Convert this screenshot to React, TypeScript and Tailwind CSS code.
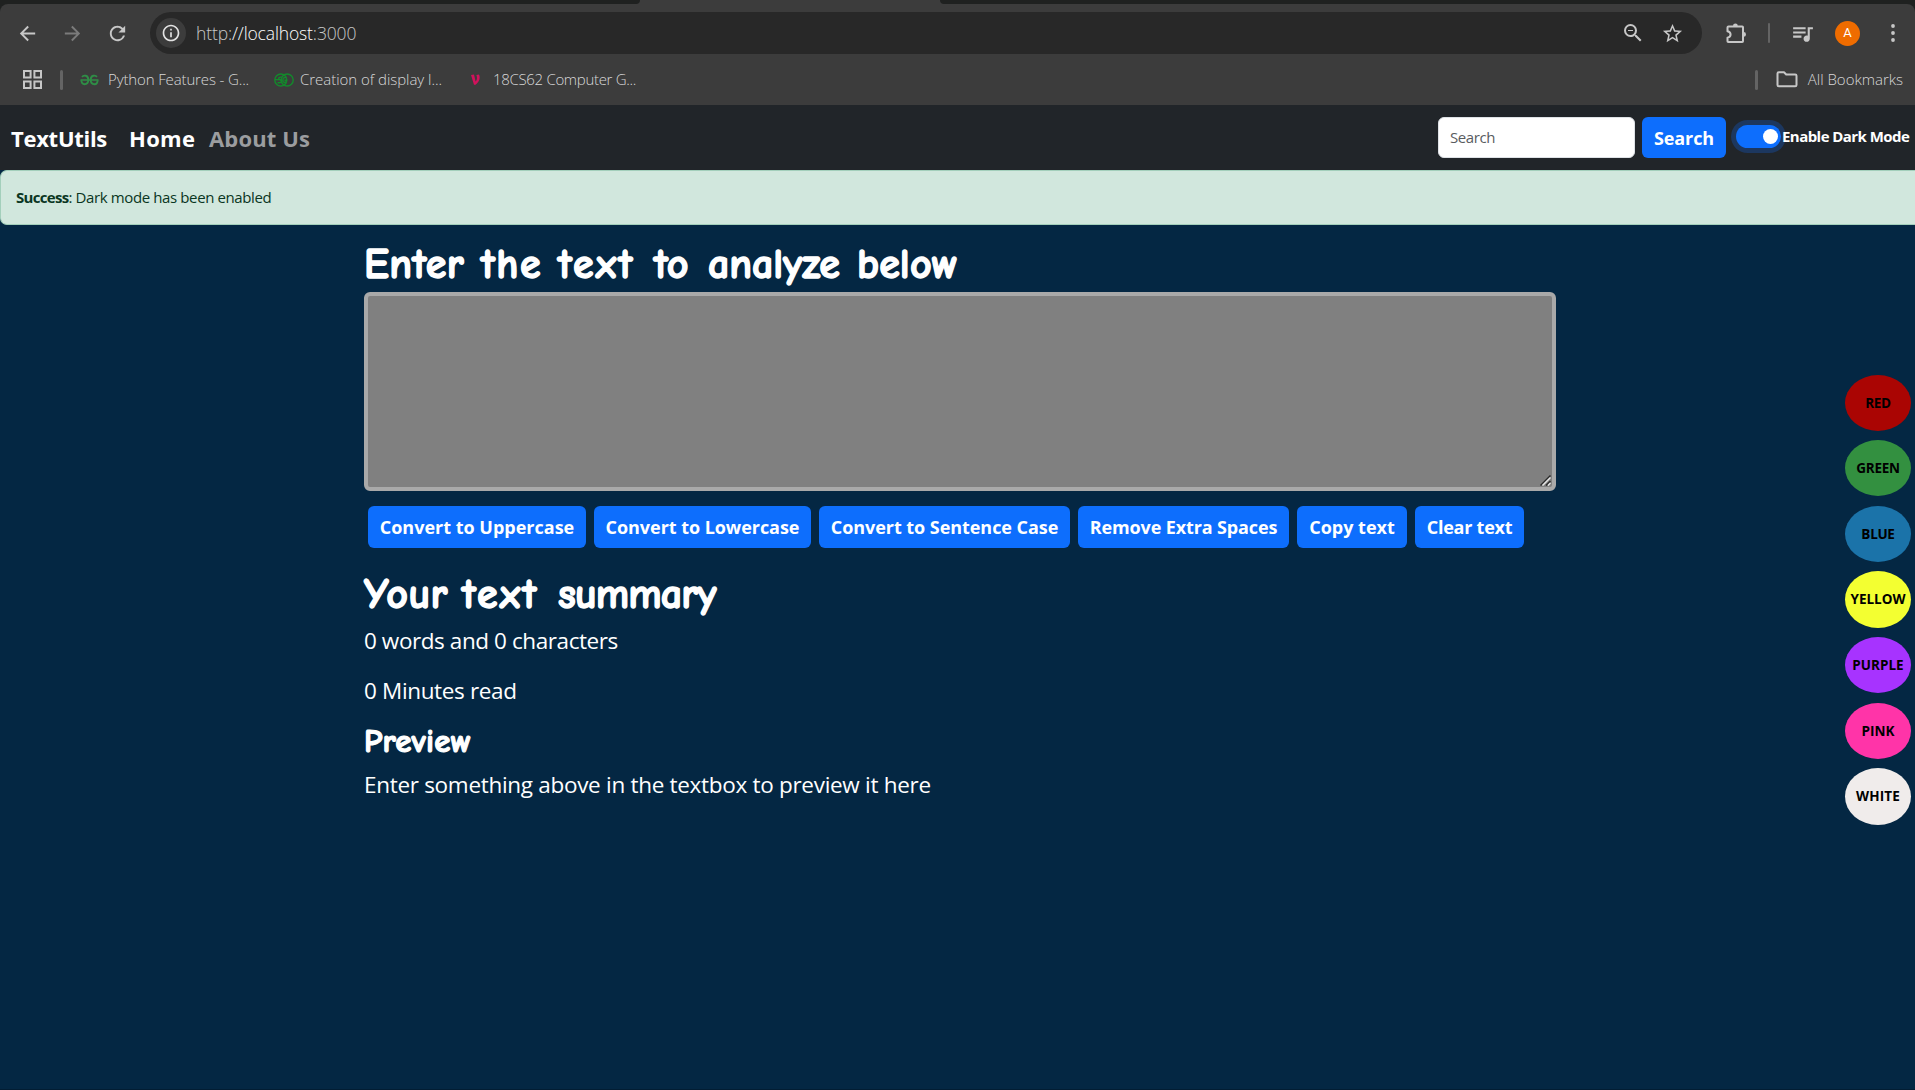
import {
  MdArrowBack,
  MdArrowForward,
  MdInfoOutline,
  MdQueueMusic,
  MdRefresh,
  MdStarBorder,
  MdZoomOut,
} from "react-icons/md";

const swatches = [
  { name: "RED", cls: "bg-[#aa0503] h-[56px] mb-[9px] tracking-[-0.4px]" },
  { name: "GREEN", cls: "bg-[#339040] h-[56px] mb-[10px] tracking-[-0.3px]" },
  { name: "BLUE", cls: "bg-[#1b73a9] h-[56px] mb-[9px] tracking-[-0.3px]" },
  { name: "YELLOW", cls: "bg-[#f3ff31] h-[57px] mb-[9px]" },
  { name: "PURPLE", cls: "bg-[#a733ff] h-[56px] mb-[10px]" },
  { name: "PINK", cls: "bg-[#ff34a8] h-[56px] mb-[9px]" },
  { name: "WHITE", cls: "bg-[#f0eceb] h-[57px] tracking-[0.15px]" },
];

const actions = [
  { label: "Convert to Uppercase", cls: "w-[218px]" },
  { label: "Convert to Lowercase", cls: "w-[217px] tracking-[-0.05px]" },
  { label: "Convert to Sentence Case", cls: "w-[251px] tracking-[-0.05px]" },
  { label: "Remove Extra Spaces", cls: "w-[211px] tracking-[-0.12px]" },
  { label: "Copy text", cls: "w-[110px]" },
  { label: "Clear text", cls: "w-[109px] tracking-[-0.25px]" },
];

const titleWords = [
  { word: "Enter", cls: "w-[117px] tracking-[0.4px]" },
  { word: "the", cls: "w-[77px] tracking-[1.5px]" },
  { word: "text", cls: "w-[96px] tracking-[2.2px]" },
  { word: "to", cls: "w-[54px]" },
  { word: "analyze", cls: "w-[149px] tracking-[-0.1px]" },
  { word: "below", cls: "tracking-[0.1px]" },
];

const summaryWords = [
  { word: "Your", cls: "w-[98px] tracking-[0.4px]" },
  { word: "text", cls: "w-[96px] tracking-[2.2px]" },
  { word: "summary", cls: "tracking-[-0.9px]" },
];

function PuzzleIcon() {
  return (
    <svg width="24" height="24" viewBox="0 0 24 24" fill="none" stroke="#c7c7c7" strokeWidth="2" strokeLinejoin="round">
      <path d="M4.5 5.5H18.2Q19 5.5 19 6.3V20.2Q19 21 18.2 21H4.3Q3.5 21 3.5 20.2V16.6C7.6 15.6 7.6 11.2 3.5 10.2V6.5Q3.5 5.5 4.5 5.5Z" />
      <path d="M9 5a2.4 2.4 0 0 1 4.8 0zM19.6 11a2.4 2.4 0 0 1 0 4.8z" fill="#c7c7c7" stroke="none" />
    </svg>
  );
}

function GridIcon() {
  return (
    <svg width="19" height="19" viewBox="0 0 19 19" fill="none" stroke="#c7c7c7" strokeWidth="2">
      <path d="M1 1h6.6v6.6H1zM11.4 1H18v6.6h-6.6zM1 11.4h6.6V18H1zM11.4 11.4H18V18h-6.6z" />
    </svg>
  );
}

function FolderIcon() {
  return (
    <svg width="22" height="17" viewBox="0 0 22 17" fill="none" stroke="#c7c7c7" strokeWidth="2" strokeLinejoin="round">
      <path d="M1.5 2.5Q1.5 1.2 2.8 1.2H8l2.2 2.3h9Q20.5 3.5 20.5 4.8V14Q20.5 15.3 19.2 15.3H2.8Q1.5 15.3 1.5 14Z" />
    </svg>
  );
}

function DotsIcon() {
  return (
    <svg width="6" height="20" viewBox="0 0 6 20" fill="#c7c7c7">
      <circle cx="3" cy="3" r="1.9" />
      <circle cx="3" cy="10" r="1.9" />
      <circle cx="3" cy="17" r="1.9" />
    </svg>
  );
}

function GfgIcon() {
  return (
    <svg width="19" height="12" viewBox="0 0 19 12" fill="none" stroke="#2f8d46" strokeWidth="1.9">
      <path d="M2 2.8C3.6 1 8.3 0.8 8.3 5.8 8.3 9 6.6 10.2 4.6 10.2 2.6 10.2 1.4 8.8 1.4 6.2M17 2.8C15.4 1 10.7 0.8 10.7 5.8 10.7 9 12.4 10.2 14.4 10.2 16.4 10.2 17.6 8.8 17.6 6.2" />
      <path d="M0.5 6h18" strokeWidth="1.5" />
    </svg>
  );
}

function RingsIcon() {
  return (
    <svg width="20" height="14" viewBox="0 0 20 14" fill="none" stroke="#138a2c" strokeWidth="1.4">
      <circle cx="6.8" cy="7" r="6" />
      <circle cx="13.2" cy="7" r="6" />
      <path d="M1 6.6h6M7.5 4.2C4 3.5 4 6.8 6.3 7 8.5 7.3 8 10.5 3.5 9.6M12.6 4.6C9.8 3.6 8.6 6 8.9 7.6 9.4 10.5 12.6 9.8 12.6 7.3H10.5" />
    </svg>
  );
}

function BrowserChrome() {
  return (
    <header className="bg-[#1f2120]">
      <div className="flex h-1 justify-between">
        <div className="w-[640px] bg-[#3c3c3c]">
          <div className="h-1 rounded-br-[10px] bg-[#1f2120]" />
        </div>
        <div className="w-[300px] bg-[#3c3c3c]" />
        <div className="flex-1 bg-[#3c3c3c]">
          <div className="h-1 rounded-bl-[10px] bg-[#1f2120]" />
        </div>
      </div>
      <div className="h-[101px] rounded-t-[8px] bg-[#3c3c3c]">
        <div className="flex h-[58px] items-center">
          <MdArrowBack className="ml-4 size-[23px] text-[#c7c7c7]" />
          <MdArrowForward className="ml-[22px] size-[23px] text-[#7b7b7b]" />
          <MdRefresh className="ml-[22px] size-[23px] text-[#c7c7c7]" />
          <div className="ml-[21px] flex h-[42px] w-[1552px] items-center rounded-full bg-[#282828] pl-[6px]">
            <div className="flex size-[30px] items-center justify-center rounded-full bg-[#3c3c3c]">
              <MdInfoOutline className="size-[20px] text-[#e3e3e3]" />
            </div>
            <div className="ml-[10px] text-[17.5px] font-light tracking-[-0.13px] text-[#c7c7c7]">
              http:<span className="text-white">//localhost</span>:3000
            </div>
            <MdZoomOut className="ml-auto size-6 text-[#c7c7c7]" />
            <MdStarBorder className="mr-[18px] ml-4 size-[23px] text-[#c7c7c7]" />
          </div>
          <div className="ml-[22px]">
            <PuzzleIcon />
          </div>
          <div className="ml-5 h-5 w-[2px] rounded-full bg-[#646464]" />
          <MdQueueMusic className="ml-5 size-[25px] text-[#c7c7c7]" />
          <div className="ml-5 flex size-[25px] items-center justify-center rounded-full bg-[#ef6c00] font-[Roboto] text-[13px] text-white">
            A
          </div>
          <div className="ml-[30px]">
            <DotsIcon />
          </div>
        </div>
        <div className="flex h-[35px] items-center text-[15px] font-light text-[#d8d8d8]">
          <div className="ml-[23px]">
            <GridIcon />
          </div>
          <div className="ml-[18px] h-5 w-[3px] rounded-full bg-[#646464]" />
          <div className="ml-[17px]">
            <GfgIcon />
          </div>
          <span className="ml-[9px] w-[142px] tracking-[-0.13px] whitespace-nowrap">Python Features - G...</span>
          <div className="ml-[24px]">
            <RingsIcon />
          </div>
          <span className="ml-[6px] w-[142px] tracking-[-0.04px] whitespace-nowrap">Creation of display l...</span>
          <svg className="ml-[29px]" width="9" height="11" viewBox="0 0 9 11">
            <path d="M0 1 3 0.5 4.6 7.5C6 6 6.5 4 5.4 1L8 0.5C9.6 4 8.4 8 4.6 10.8H3Z" fill="#d0125c" />
          </svg>
          <span className="ml-[13px] tracking-[-0.32px] whitespace-nowrap">18CS62 Computer G...</span>
          <div className="ml-auto h-5 w-[3px] rounded-full bg-[#646464]" />
          <div className="ml-[18px]">
            <FolderIcon />
          </div>
          <span className="mr-[12px] ml-[10px]">All Bookmarks</span>
        </div>
      </div>
    </header>
  );
}

function Navbar() {
  return (
    <nav className="flex h-[65px] items-center bg-[#212529] text-[22px] font-bold text-white">
      <a className="ml-[11px] w-[118px] pt-[2px] tracking-[-0.28px]">TextUtils</a>
      <a className="w-[80px] pt-[2px] tracking-[0.3px]">Home</a>
      <a className="pt-[2px] tracking-[0.15px] text-[#9b9d9f]">About Us</a>
      <input
        placeholder="Search"
        className="ml-auto h-[41px] w-[197px] rounded-[6px] border border-[#dee2e6] bg-white px-[11px] pb-[2px] text-[15px] font-normal tracking-[-0.4px] placeholder:text-[#595c5f]"
      />
      <button className="ml-[7px] h-[41px] w-[84px] rounded-[6px] bg-[#0d6efd] pt-[2px] text-[18px] font-bold tracking-[-0.1px]">
        Search
      </button>
      <div className="mr-[6px] ml-[10px] flex items-center pb-[2px]">
        <span className="flex h-[23px] w-[45px] items-center justify-end rounded-full bg-[#0d6efd] pr-[3px] shadow-[0_0_0_5px_#1c375f]">
          <span className="size-[15px] rounded-full bg-white" />
        </span>
        <span className="relative w-[128px] pl-[1px] text-[15px] tracking-[-0.55px] whitespace-nowrap">Enable Dark Mode</span>
      </div>
    </nav>
  );
}

function Heading({ words, className }: { words: { word: string; cls: string }[]; className: string }) {
  return (
    <h1
      className={`flex font-['Comic_Neue','Comic_Sans_MS',cursive] text-[42px] leading-[53px] font-bold whitespace-pre [-webkit-text-stroke:1.4px_white] ${className}`}
    >
      {words.map((w, i) => (
        <span key={w.word} className={w.cls}>
          {i < words.length - 1 ? `${w.word} ` : w.word}
        </span>
      ))}
    </h1>
  );
}

function TextBox() {
  return (
    <div className="relative h-[199px]">
      <textarea className="block h-full w-full resize-none rounded-[6px] border-4 border-[#a9a9a9] bg-[#808080] outline-none" />
      <svg className="absolute right-[5px] bottom-[5px]" width="11" height="11" viewBox="0 0 11 11" fill="none" strokeWidth="1.5">
        <path d="M0.5 10.5 10.5 0.5M6 10.5 10.5 6" stroke="#2b2b2b" />
        <path d="M2.5 10.5 10.5 2.5M8 10.5 10.5 8" stroke="#e6e6e6" />
      </svg>
    </div>
  );
}

export default function App() {
  return (
    <div className="flex h-[1090px] w-[1915px] flex-col overflow-hidden border-b border-[#021d33] bg-[#042743] font-['Open_Sans',sans-serif] text-white">
      <BrowserChrome />
      <Navbar />
      <div className="flex h-[55px] items-center rounded-l-[7px] border border-r-0 border-[#a3cfbb] bg-[#d1e7dd] pl-[15px] text-[15px] text-[#0a3622]">
        <strong className="tracking-[-0.7px]">Success</strong>
        <span className="tracking-[-0.38px]">: Dark mode has been enabled</span>
      </div>
      <main className="flex flex-1 items-start">
        <section className="ml-[364px] w-[1192px]">
          <Heading words={titleWords} className="mt-[13px] h-[54px]" />
          <TextBox />
          <div className="mt-[15px] ml-1 flex gap-2">
            {actions.map((a) => (
              <button key={a.label} className={`h-[42px] rounded-[6px] bg-[#0d6efd] text-[18px] font-bold whitespace-nowrap ${a.cls}`}>
                {a.label}
              </button>
            ))}
          </div>
          <Heading words={summaryWords} className="mt-[20px] h-[56px]" />
          <p className="h-[50px] text-[22.5px] leading-[34px] tracking-[-0.42px]">0 words and 0 characters</p>
          <p className="h-[50px] text-[22.5px] leading-[34px] tracking-[-0.35px]">0 Minutes read</p>
          <h2 className="-mt-px h-[45px] font-['Comic_Neue','Comic_Sans_MS',cursive] text-[33px] leading-[36px] font-bold tracking-[0.3px] [-webkit-text-stroke:1.2px_white]">
            Preview
          </h2>
          <p className="text-[22.5px] leading-[34px] tracking-[-0.3px]">Enter something above in the textbox to preview it here</p>
        </section>
        <aside className="mt-[150px] mr-1 ml-auto flex w-[66px] flex-col">
          {swatches.map((s) => (
            <button key={s.name} className={`flex shrink-0 items-center justify-center rounded-[50%] text-[13.5px] font-bold text-black ${s.cls}`}>
              {s.name}
            </button>
          ))}
        </aside>
      </main>
    </div>
  );
}
